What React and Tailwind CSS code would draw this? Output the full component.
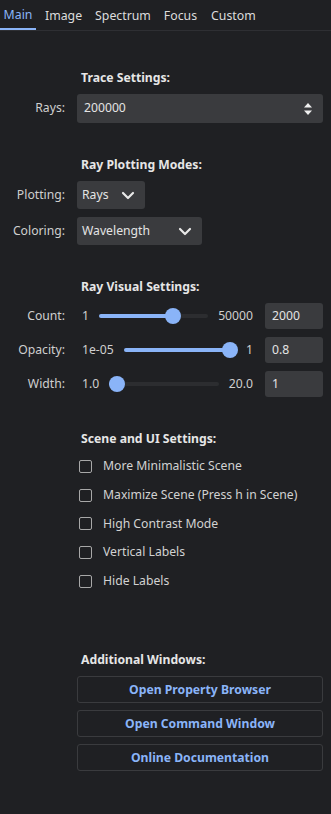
import React from "react";

const font = { fontFamily: '"Noto Sans", "Open Sans", sans-serif' };

function Chevron() {
  return (
    <svg width="14" height="9" viewBox="0 0 14 9" className="shrink-0">
      <path d="M2 2 L7 7 L12 2" fill="none" stroke="#e8e8e8" strokeWidth="2.2" strokeLinecap="round" strokeLinejoin="round" />
    </svg>
  );
}

function SliderRow({ label, min, max, pct, value, mt }) {
  return (
    <div className={`flex h-[26px] items-center whitespace-nowrap ${mt}`}>
      <span className="w-[65px] text-right text-[#cfcfcf]">{label}</span>
      <div className="ml-[17px] flex flex-1 items-center">
        <span className="text-[#cfcfcf]">{min}</span>
        <div className="relative mx-[10px] h-[16px] flex-1">
          <div className="absolute left-0 right-0 top-[6px] h-[4px] rounded-full bg-[#2c2d30]" />
          <div className="absolute left-0 top-[6px] h-[4px] rounded-full bg-[#8ab4f8]" style={{ width: `${pct}%` }} />
          <div className="absolute top-0 h-[16px] w-[16px] rounded-full bg-[#8ab4f8]" style={{ left: `calc(${pct}% - 8px)` }} />
        </div>
        <span className="text-[#cfcfcf]">{max}</span>
      </div>
      <div className="ml-[12px] flex h-[26px] w-[58px] items-center rounded-[3px] bg-[#3a3b3e] px-[7px] text-[#e4e4e4]">
        {value}
      </div>
    </div>
  );
}

function Check({ label }) {
  return (
    <div className="flex h-[28.7px] items-center pl-[79px]">
      <div className="h-[13px] w-[13px] rounded-[2px] border-[1.5px] border-[#a8a8a8]" />
      <span className="ml-[11px] text-[#d2d2d2]">{label}</span>
    </div>
  );
}

function Title({ children, mt }) {
  return <div className={`pl-[81px] font-bold leading-[18px] text-[#e6e6e6] ${mt}`}>{children}</div>;
}

function Btn({ children, mt }) {
  return (
    <div className={`ml-[77px] mr-[8px] flex h-[27px] items-center justify-center rounded-[3px] border border-[#3a3b3e] font-bold text-[#8ab4f8] ${mt}`}>
      {children}
    </div>
  );
}

export default function App() {
  return (
    <div className="h-[814px] w-[331px] overflow-hidden bg-[#1f2023] text-[12.2px]" style={font}>
      <div className="flex h-[31px] items-stretch border-b border-[#2e2f33] pt-[2px] text-[12.3px]">
        <div className="flex w-[36px] items-center justify-center border-b-2 border-[#8ab4f8] text-[#8ab4f8]">Main</div>
        <div className="ml-[9px] flex items-center text-[#dcdcdc]">Image</div>
        <div className="ml-[13px] flex items-center text-[#dcdcdc]">Spectrum</div>
        <div className="ml-[13px] flex items-center text-[#dcdcdc]">Focus</div>
        <div className="ml-[14px] flex items-center text-[#dcdcdc]">Custom</div>
      </div>

      <Title mt="mt-[38px]">Trace Settings:</Title>
      <div className="mt-[7px] flex h-[29px] items-center">
        <span className="w-[65px] text-right text-[#cfcfcf]">Rays:</span>
        <div className="ml-[12px] mr-[8px] flex h-[29px] flex-1 items-center justify-between rounded-[3px] bg-[#3a3b3e] pl-[7px] pr-[10px] text-[#e4e4e4]">
          <span>200000</span>
          <svg width="10" height="16" viewBox="0 0 10 16">
            <path d="M5 2 L9 6.5 L1 6.5 Z" fill="#f0f0f0" />
            <path d="M5 14 L9 9.5 L1 9.5 Z" fill="#f0f0f0" />
          </svg>
        </div>
      </div>

      <Title mt="mt-[33px]">Ray Plotting Modes:</Title>
      <div className="mt-[7px] flex h-[28px] items-center">
        <span className="w-[65px] text-right text-[#cfcfcf]">Plotting:</span>
        <div className="ml-[12px] flex h-[28px] w-[68px] items-center justify-between rounded-[3px] bg-[#3a3b3e] pl-[5px] pr-[10px] text-[#e4e4e4]">
          <span>Rays</span>
          <Chevron />
        </div>
      </div>
      <div className="mt-[8px] flex h-[28px] items-center">
        <span className="w-[65px] text-right text-[#cfcfcf]">Coloring:</span>
        <div className="ml-[12px] flex h-[28px] w-[125px] items-center justify-between rounded-[3px] bg-[#3a3b3e] pl-[5px] pr-[10px] text-[#e4e4e4]">
          <span>Wavelength</span>
          <Chevron />
        </div>
      </div>

      <Title mt="mt-[33px]">Ray Visual Settings:</Title>
      <div className="pr-[8px]">
        <SliderRow mt="mt-[7px]" label="Count:" min="1" max="50000" pct={68} value="2000" />
        <SliderRow mt="mt-[8px]" label="Opacity:" min="1e-05" max="1" pct={95} value="0.8" />
        <SliderRow mt="mt-[8px]" label="Width:" min="1.0" max="20.0" pct={7} value="1" />
      </div>

      <Title mt="mt-[33px]">Scene and UI Settings:</Title>
      <div className="mt-[4px]">
        <Check label="More Minimalistic Scene" />
        <Check label="Maximize Scene (Press h in Scene)" />
        <Check label="High Contrast Mode" />
        <Check label="Vertical Labels" />
        <Check label="Hide Labels" />
      </div>

      <Title mt="mt-[56px]">Additional Windows:</Title>
      <Btn mt="mt-[7px]">Open Property Browser</Btn>
      <Btn mt="mt-[7px]">Open Command Window</Btn>
      <Btn mt="mt-[7px]">Online Documentation</Btn>
    </div>
  );
}
